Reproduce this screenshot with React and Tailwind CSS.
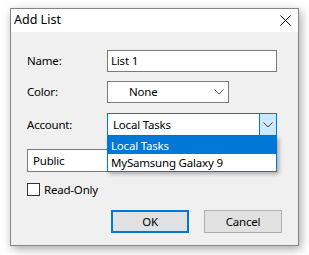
export default function App() {
  return (
    <div
      className="w-[309px] h-[255px] bg-white pt-[8px] pl-[10px] text-[11.5px] tracking-[-0.2px] text-black"
      style={{ fontFamily: '"Noto Sans", "Open Sans", sans-serif' }}
    >
      <div className="w-[289px] h-[238px] border border-[#858585] bg-[#f0f0f0] flex flex-col shadow-[2px_3px_9px_rgba(0,0,0,0.35)]">
        {/* title bar */}
        <div className="h-[23px] bg-white flex items-center justify-between pl-[3px] pr-[7px]">
          <span className="text-[12.5px] tracking-normal leading-none">Add List</span>
          <svg width="11" height="11" viewBox="0 0 11 11">
            <path d="M0.5 0.5 L10.5 10.5 M10.5 0.5 L0.5 10.5" stroke="#000" strokeWidth="1" />
          </svg>
        </div>

        {/* body */}
        <div className="relative flex-1 flex flex-col pl-[16px] pt-[18px]">
          <div className="flex items-center h-[22px]">
            <span className="w-[80px]">Name:</span>
            <div className="w-[170px] h-[22px] border border-[#7a7a7a] bg-white flex items-center pl-[3px]">
              List 1
            </div>
          </div>

          <div className="flex items-center h-[22px] mt-[9px]">
            <span className="w-[80px]">Color:</span>
            <div className="w-[122px] h-[22px] border border-[#7a7a7a] bg-white flex items-center justify-between pl-[21px] pr-[4px]">
              <span>None</span>
              <svg width="10" height="6" viewBox="0 0 10 6">
                <path d="M0.5 0.5 L5 5 L9.5 0.5" fill="none" stroke="#606060" strokeWidth="1" />
              </svg>
            </div>
          </div>

          <div className="flex items-center h-[23px] mt-[10px]">
            <span className="w-[80px]">Account:</span>
            <div className="w-[170px] h-[23px] border border-[#0078d7] bg-white flex items-center justify-between pl-[5px]">
              <span>Local Tasks</span>
              <div className="w-[17px] h-full border-l border-[#0078d7] bg-[#cce8ff] flex items-center justify-center">
                <svg width="10" height="6" viewBox="0 0 10 6">
                  <path d="M0.5 0.5 L5 5 L9.5 0.5" fill="none" stroke="#404040" strokeWidth="1" />
                </svg>
              </div>
            </div>
          </div>

          <div className="w-[250px] h-[23px] mt-[13px] border border-[#7a7a7a] bg-white flex items-center pl-[5px]">
            Public
          </div>

          <div className="flex items-center h-[13px] mt-[11px]">
            <div className="w-[13px] h-[13px] border border-[#333] bg-white" />
            <span className="ml-[4px]">Read-Only</span>
          </div>

          <div className="flex justify-end gap-[15px] pr-[16px] mt-[14px]">
            <button className="w-[78px] h-[23px] border-2 border-[#0078d7] bg-[#e1e1e1] flex items-center justify-center">
              OK
            </button>
            <button className="w-[78px] h-[23px] border border-[#adadad] bg-[#e1e1e1] flex items-center justify-center">
              Cancel
            </button>
          </div>

          {/* open dropdown list */}
          <div className="absolute left-[96px] top-[104px] w-[170px] border border-[#0078d7] bg-white shadow-[2px_2px_4px_rgba(0,0,0,0.3)]">
            <div className="h-[17px] bg-[#0078d7] text-white flex items-center pl-[3px]">Local Tasks</div>
            <div className="h-[17px] flex items-center pl-[3px]">MySamsung Galaxy 9</div>
          </div>
        </div>
      </div>
    </div>
  );
}
